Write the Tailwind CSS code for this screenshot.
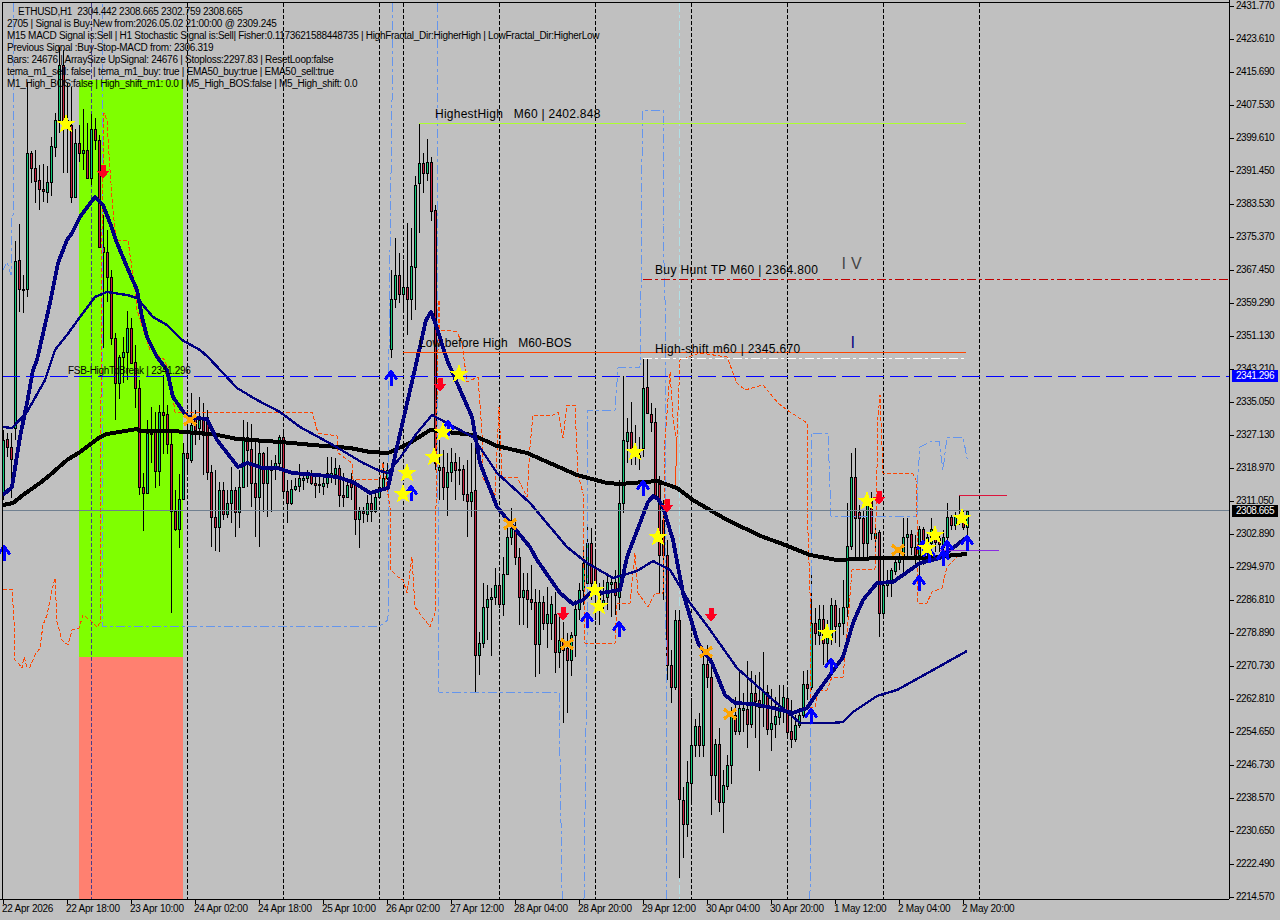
<!DOCTYPE html>
<html lang="en">
<head>
    <meta charset="UTF-8">
    <title>ETHUSD,H1</title>
    <script src="https://cdn.jsdelivr.net/npm/@tailwindcss/browser@4"></script>
</head>
<body class="bg-[#c0c0c0]">
<div class="w-[1280px] h-[920px] overflow-hidden grid grid-cols-[1229px_51px] grid-rows-[899px_21px] bg-[#c0c0c0] text-black text-[10px] leading-[12px] tracking-[-0.28px] font-['Liberation_Sans',sans-serif]">

    <!-- chart -->
    <div class="relative">
        <svg width="1229" height="899" viewBox="0 0 1229 899" fill="none" stroke-linejoin="round" class="absolute inset-0 [shape-rendering:crispEdges]">
            <defs>
                <polygon id="star" fill="#ffff00" points="0,-10 2.6,-3.2 9.8,-3.2 4,1.2 6.2,8.5 0,4.2 -6.2,8.5 -4,1.2 -9.8,-3.2 -2.6,-3.2"/>
                <path id="cross" stroke="#ffa500" stroke-width="3.4" d="M-6,-5 L6,5 M-6,5 L6,-5"/>
                <path id="down" fill="#ff0020" d="M-2.5,-7 H2.5 V-1 H6.5 L0,7 L-6.5,-1 H-2.5 Z"/>
                <path id="up" stroke="#0000ff" stroke-width="3" d="M0,8 V-5 M-6,1.5 L0,-6.5 L6,1.5"/>
            </defs>

            <rect x="79" y="80" width="104" height="577" fill="#7fff00"/>
            <rect x="79" y="657" width="104" height="242" fill="#ff8070"/>

            <!-- period separators -->
            <g stroke="#000" stroke-dasharray="4 2">
                <path d="M187.5 3V899M283.5 3V899M379.5 3V899M403.5 3V899M499.5 3V899M595.5 3V899M691.5 3V899M787.5 3V899M883.5 3V899M979.5 3V899"/>
            </g>
            <path d="M91.5 3V899" stroke="#483d8b" stroke-dasharray="4 2"/>
            <path d="M679.5 3V899" stroke="#b0e0e6" stroke-dasharray="9 3 3 3"/>

            <g id="candles"></g>

            <!-- step lines -->
            <g stroke="#6495ed" stroke-dasharray="9 3 3 3">
                <polyline points="13,3 13,215 11,218 11,275 7,262 3,270"/>
                <polyline points="392,3 392,100 390,250 389,350 388,620 380,626 102,626 102,3"/>
                <polyline points="437,3 437,300 439,692 559,692 562,888 563,899"/>
                <polyline points="584,899 587,640 587,410 615,410 618,368 640,367 641,290 641,207 643,110 663,110 663,225 665,300 666,640 667,899"/>
                <polyline points="810,899 811,600 811,433 828,433 831,516 917,516 918,473 920,447 932,441 939,441 943,470 947,437 963,437 968,463"/>
            </g>
            <g stroke="#ff4500" stroke-dasharray="4 2">
                <polyline points="3,589 12,589 14,620 15,660 18,663 22,668 24,657 27,667 30,667 35,655 40,648 43,625 47,615 52,590 55,578 57,622 62,640 68,645 72,630 79,628 83,615 90,620 97,627 100,623 100,564 101,400 102,230 104,113 107,120 110,170 113,210 116,240 128,240 130,255 134,280 137,310 150,350 165,360 172,390 175,412 312,412 318,433 337,436 338,453 352,463 353,479 380,479 383,463 390,507 391,570 398,577 403,580 407,593 412,557 415,607 430,627 435,613 437,400 439,300 440,330 445,330 457,332 462,343 467,382 478,377 482,433 483,478 495,495 499,407 502,477 517,477 527,497 530,447 533,415 553,415 558,412 563,438 567,405 575,405 578,475 583,493 585,643 615,644 617,603 630,603 635,553 638,593 648,607 655,593 663,593 665,440 670,372 673,417 677,443 675,490 680,360 700,353 727,357 737,383 745,390 763,385 778,403 787,410 807,423 808,533 811,623 810,707 815,707 818,690 827,690 832,677 843,677 847,633 852,570 875,569 878,417 880,395 883,473 913,474 916,480 917,517 918,603 927,603 932,592 942,588 947,567 957,557 967,554"/>
            </g>

            <!-- moving averages -->
            <polyline stroke="#000" stroke-width="4" points="3,505 13,503 23,495 40,483 50,475 67,460 80,452 100,437 107,434 137,429 140,431 173,431 197,433 213,434 237,439 280,442 313,445 350,448 370,452 388,453 410,443 430,430 473,435 497,446 527,453 577,475 607,483 620,484 657,481 677,488 693,500 727,520 763,537 780,543 810,555 837,560 880,558 923,558 967,554"/>
            <polyline stroke="#000080" stroke-width="2.4" points="3,427 12,428 27,412 45,380 55,350 67,335 80,317 95,297 107,292 127,295 137,298 153,317 167,325 182,340 200,350 208,357 237,388 257,400 280,412 300,427 333,445 363,463 380,471 388,473 400,458 417,433 432,415 473,437 497,473 530,503 567,547 587,563 613,578 637,571 653,561 670,570 690,603 708,627 737,668 773,700 800,723 832,723 843,722 853,712 877,696 897,690 933,670 967,651"/>
            <polyline stroke="#000080" stroke-width="3.8" points="3,495 12,487 20,437 27,403 33,370 37,360 50,303 58,263 67,240 72,233 80,217 95,197 103,205 110,223 117,243 127,267 137,290 142,317 147,337 157,357 167,370 173,397 187,417 207,419 217,440 238,467 247,463 263,468 277,468 293,473 317,475 337,477 353,482 370,493 388,488 397,447 417,360 426,320 431,312 436,325 447,360 472,417 480,463 497,507 530,547 537,560 560,593 573,604 583,600 593,590 602,593 620,590 627,557 640,523 648,502 653,496 658,499 663,507 673,540 683,593 698,643 712,663 725,695 735,703 753,704 773,708 793,713 807,708 817,693 843,657 853,623 863,600 877,583 893,582 920,563 940,558 967,537"/>

            <!-- price levels -->
            <path d="M2 376.5H1229" stroke="#0000ff" stroke-dasharray="18 6"/>
            <path d="M2 510.5H1229" stroke="#708090"/>
            <path d="M403 352.5H966" stroke="#ff4500"/>
            <path d="M643 358.5H964" stroke="#fff" stroke-dasharray="9 3 3 3"/>
            <path d="M643 279.5H1229" stroke="#c00000" stroke-dasharray="9 3 3 3"/>
            <path d="M419 123.5H966" stroke="#adff2f"/>
            <path d="M959 495.5H1007" stroke="#dc143c"/>
            <path d="M940 550.5H999" stroke="#8a2be2"/>

            <!-- signals -->
            <use href="#down" x="103" y="172"/><use href="#down" x="440" y="385"/><use href="#down" x="563" y="614"/>
            <use href="#down" x="667" y="506"/><use href="#down" x="711" y="615"/><use href="#down" x="879" y="498"/>
            <use href="#up" x="4" y="553"/><use href="#up" x="391" y="378"/><use href="#up" x="411" y="493"/>
            <use href="#up" x="448" y="428"/><use href="#up" x="587" y="620"/><use href="#up" x="619" y="629"/>
            <use href="#up" x="643" y="488"/><use href="#up" x="811" y="716"/><use href="#up" x="831" y="666"/>
            <use href="#up" x="919" y="583"/><use href="#up" x="923" y="548"/><use href="#up" x="929" y="555"/>
            <use href="#up" x="943" y="558"/><use href="#up" x="947" y="548"/><use href="#up" x="967" y="543"/>
            <use href="#cross" x="190" y="420"/><use href="#cross" x="510" y="524"/><use href="#cross" x="567" y="644"/>
            <use href="#cross" x="706" y="652"/><use href="#cross" x="730" y="714"/><use href="#cross" x="898" y="550"/>
            <use href="#star" x="66" y="124"/><use href="#star" x="407" y="473"/><use href="#star" x="403" y="494"/>
            <use href="#star" x="434" y="457"/><use href="#star" x="443" y="432"/><use href="#star" x="459" y="374"/>
            <use href="#star" x="635" y="452"/><use href="#star" x="595" y="590"/><use href="#star" x="599" y="606"/>
            <use href="#star" x="658" y="537"/><use href="#star" x="827" y="633"/><use href="#star" x="867" y="501"/>
            <use href="#star" x="927" y="548"/><use href="#star" x="935" y="535"/><use href="#star" x="962" y="518"/>

            <!-- chart frame -->
            <path d="M2.5 2V899M2 2.5H1229" stroke="#000"/>

            <g class="[shape-rendering:auto]" fill="#000">
                <text x="68" y="374" class="text-[10px]">FSB-HighToBreak | 2341.296</text>
                <text x="435" y="118" class="text-[12px] tracking-[0.25px]">HighestHigh&#160;&#160;&#160;M60 | 2402.848</text>
                <text x="419" y="347" class="text-[12px] tracking-[0.1px]">Low before High&#160;&#160;&#160;M60-BOS</text>
                <text x="655" y="274" class="text-[12px] tracking-[0.35px]">Buy Hunt TP M60 | 2364.800</text>
                <text x="655" y="353" class="text-[12px] tracking-[0.33px]">High-shift m60 | 2345.670</text>
                <text x="842" y="269" class="text-[16px]" fill="#444">l</text>
                <text x="851" y="269" class="text-[16px]" fill="#444">V</text>
                <text x="851" y="348" class="text-[16px]" fill="#000080">l</text>
            </g>
        </svg>

        <div class="absolute top-[6px] left-[7px] flex flex-col whitespace-pre">
            <p class="pl-[11px]">ETHUSD,H1  2304.442 2308.665 2302.759 2308.665</p>
            <p>2705 | Signal is Buy-New from:2026.05.02 21:00:00 @ 2309.245</p>
            <p>M15 MACD Signal is:Sell | H1 Stochastic Signal is:Sell| Fisher:0.1173621588448735 | HighFractal_Dir:HigherHigh | LowFractal_Dir:HigherLow</p>
            <p>Previous Signal :Buy-Stop-MACD from: 2306.319</p>
            <p>Bars: 24676 | ArraySize UpSignal: 24676 | Stoploss:2297.83 | ResetLoop:false</p>
            <p>tema_m1_sell: false | tema_m1_buy: true | EMA50_buy:true | EMA50_sell:true</p>
            <p>M1_High_BOS:false | High_shift_m1: 0.0 | M5_High_BOS:false | M5_High_shift: 0.0</p>
        </div>
    </div>

    <!-- price axis -->
    <div id="price-axis" class="relative border-l border-black flex flex-col leading-[10px] tracking-[-0.45px]">
        <div class="-mt-[10.5px]"></div>
        <div class="flex items-center h-[33px] shrink-0"><i class="w-[4px] h-px bg-black"></i><span class="ml-[2px]">2431.770</span></div>
        <div class="flex items-center h-[33px] shrink-0"><i class="w-[4px] h-px bg-black"></i><span class="ml-[2px]">2423.610</span></div>
        <div class="flex items-center h-[33px] shrink-0"><i class="w-[4px] h-px bg-black"></i><span class="ml-[2px]">2415.690</span></div>
        <div class="flex items-center h-[33px] shrink-0"><i class="w-[4px] h-px bg-black"></i><span class="ml-[2px]">2407.530</span></div>
        <div class="flex items-center h-[33px] shrink-0"><i class="w-[4px] h-px bg-black"></i><span class="ml-[2px]">2399.610</span></div>
        <div class="flex items-center h-[33px] shrink-0"><i class="w-[4px] h-px bg-black"></i><span class="ml-[2px]">2391.450</span></div>
        <div class="flex items-center h-[33px] shrink-0"><i class="w-[4px] h-px bg-black"></i><span class="ml-[2px]">2383.530</span></div>
        <div class="flex items-center h-[33px] shrink-0"><i class="w-[4px] h-px bg-black"></i><span class="ml-[2px]">2375.370</span></div>
        <div class="flex items-center h-[33px] shrink-0"><i class="w-[4px] h-px bg-black"></i><span class="ml-[2px]">2367.450</span></div>
        <div class="flex items-center h-[33px] shrink-0"><i class="w-[4px] h-px bg-black"></i><span class="ml-[2px]">2359.290</span></div>
        <div class="flex items-center h-[33px] shrink-0"><i class="w-[4px] h-px bg-black"></i><span class="ml-[2px]">2351.130</span></div>
        <div class="flex items-center h-[33px] shrink-0"><i class="w-[4px] h-px bg-black"></i><span class="ml-[2px]">2343.210</span></div>
        <div class="flex items-center h-[33px] shrink-0"><i class="w-[4px] h-px bg-black"></i><span class="ml-[2px]">2335.050</span></div>
        <div class="flex items-center h-[33px] shrink-0"><i class="w-[4px] h-px bg-black"></i><span class="ml-[2px]">2327.130</span></div>
        <div class="flex items-center h-[33px] shrink-0"><i class="w-[4px] h-px bg-black"></i><span class="ml-[2px]">2318.970</span></div>
        <div class="flex items-center h-[33px] shrink-0"><i class="w-[4px] h-px bg-black"></i><span class="ml-[2px]">2311.050</span></div>
        <div class="flex items-center h-[33px] shrink-0"><i class="w-[4px] h-px bg-black"></i><span class="ml-[2px]">2302.890</span></div>
        <div class="flex items-center h-[33px] shrink-0"><i class="w-[4px] h-px bg-black"></i><span class="ml-[2px]">2294.970</span></div>
        <div class="flex items-center h-[33px] shrink-0"><i class="w-[4px] h-px bg-black"></i><span class="ml-[2px]">2286.810</span></div>
        <div class="flex items-center h-[33px] shrink-0"><i class="w-[4px] h-px bg-black"></i><span class="ml-[2px]">2278.890</span></div>
        <div class="flex items-center h-[33px] shrink-0"><i class="w-[4px] h-px bg-black"></i><span class="ml-[2px]">2270.730</span></div>
        <div class="flex items-center h-[33px] shrink-0"><i class="w-[4px] h-px bg-black"></i><span class="ml-[2px]">2262.810</span></div>
        <div class="flex items-center h-[33px] shrink-0"><i class="w-[4px] h-px bg-black"></i><span class="ml-[2px]">2254.650</span></div>
        <div class="flex items-center h-[33px] shrink-0"><i class="w-[4px] h-px bg-black"></i><span class="ml-[2px]">2246.730</span></div>
        <div class="flex items-center h-[33px] shrink-0"><i class="w-[4px] h-px bg-black"></i><span class="ml-[2px]">2238.570</span></div>
        <div class="flex items-center h-[33px] shrink-0"><i class="w-[4px] h-px bg-black"></i><span class="ml-[2px]">2230.650</span></div>
        <div class="flex items-center h-[33px] shrink-0"><i class="w-[4px] h-px bg-black"></i><span class="ml-[2px]">2222.490</span></div>
        <div class="flex items-center h-[33px] shrink-0"><i class="w-[4px] h-px bg-black"></i><span class="ml-[2px]">2214.570</span></div>
        <div class="absolute left-[2px] top-[370px] w-[46px] h-[12px] leading-[12px] bg-[#0000ff] text-white text-center">2341.296</div>
        <div class="absolute left-[2px] top-[505px] w-[46px] h-[12px] leading-[12px] bg-black text-white text-center">2308.665</div>
    </div>

    <!-- time axis -->
    <div class="col-span-2 tracking-[-0.25px]">
        <div class="w-[1229px] border-t border-black flex">
            <div class="w-[64px] shrink-0"><i class="block w-px h-[4px] bg-black ml-[3px]"></i><span class="block pl-[2px] -mt-[1px]">22 Apr 2026</span></div>
            <div class="w-[64px] shrink-0"><i class="block w-px h-[4px] bg-black ml-[3px]"></i><span class="block pl-[2px] -mt-[1px]">22 Apr 18:00</span></div>
            <div class="w-[64px] shrink-0"><i class="block w-px h-[4px] bg-black ml-[3px]"></i><span class="block pl-[2px] -mt-[1px]">23 Apr 10:00</span></div>
            <div class="w-[64px] shrink-0"><i class="block w-px h-[4px] bg-black ml-[3px]"></i><span class="block pl-[2px] -mt-[1px]">24 Apr 02:00</span></div>
            <div class="w-[64px] shrink-0"><i class="block w-px h-[4px] bg-black ml-[3px]"></i><span class="block pl-[2px] -mt-[1px]">24 Apr 18:00</span></div>
            <div class="w-[64px] shrink-0"><i class="block w-px h-[4px] bg-black ml-[3px]"></i><span class="block pl-[2px] -mt-[1px]">25 Apr 10:00</span></div>
            <div class="w-[64px] shrink-0"><i class="block w-px h-[4px] bg-black ml-[3px]"></i><span class="block pl-[2px] -mt-[1px]">26 Apr 02:00</span></div>
            <div class="w-[64px] shrink-0"><i class="block w-px h-[4px] bg-black ml-[3px]"></i><span class="block pl-[2px] -mt-[1px]">27 Apr 12:00</span></div>
            <div class="w-[64px] shrink-0"><i class="block w-px h-[4px] bg-black ml-[3px]"></i><span class="block pl-[2px] -mt-[1px]">28 Apr 04:00</span></div>
            <div class="w-[64px] shrink-0"><i class="block w-px h-[4px] bg-black ml-[3px]"></i><span class="block pl-[2px] -mt-[1px]">28 Apr 20:00</span></div>
            <div class="w-[64px] shrink-0"><i class="block w-px h-[4px] bg-black ml-[3px]"></i><span class="block pl-[2px] -mt-[1px]">29 Apr 12:00</span></div>
            <div class="w-[64px] shrink-0"><i class="block w-px h-[4px] bg-black ml-[3px]"></i><span class="block pl-[2px] -mt-[1px]">30 Apr 04:00</span></div>
            <div class="w-[64px] shrink-0"><i class="block w-px h-[4px] bg-black ml-[3px]"></i><span class="block pl-[2px] -mt-[1px]">30 Apr 20:00</span></div>
            <div class="w-[64px] shrink-0"><i class="block w-px h-[4px] bg-black ml-[3px]"></i><span class="block pl-[2px] -mt-[1px]">1 May 12:00</span></div>
            <div class="w-[64px] shrink-0"><i class="block w-px h-[4px] bg-black ml-[3px]"></i><span class="block pl-[2px] -mt-[1px]">2 May 04:00</span></div>
            <div class="w-[64px] shrink-0"><i class="block w-px h-[4px] bg-black ml-[3px]"></i><span class="block pl-[2px] -mt-[1px]">2 May 20:00</span></div>
        </div>
    </div>
</div>

<script>
// high, body top, body bottom, low, colour; one bar every 4px from x=3
var bars = `430 440 495 500 g|433 439 447 457 r|433 447 459 498 r|241 261 428 440 g|224 260 289 312 r|275 289 290 313 r|83 153 289 297 g|151 153 168 183 r|150 168 181 203 r|165 180 189 210 r
164 189 191 202 r|166 182 192 203 g|137 146 182 196 g|113 120 147 157 g|47 65 120 133 g|50 65 120 173 r|83 120 125 173 r|87 125 197 203 r|129 143 197 197 g|125 143 153 162 r
109 150 153 170 g|123 150 178 178 r|114 129 178 185 g|118 129 140 150 r|135 140 247 247 r|215 247 252 348 r|230 252 277 302 r|270 277 338 345 r|333 338 383 420 r|355 357 383 399 g
337 352 357 383 g|311 328 352 380 g|318 328 363 363 r|345 362 388 408 r|380 388 487 495 r|473 487 493 531 r|420 433 493 493 g|407 433 434 463 g|412 432 471 488 r|405 412 471 486 g
375 412 415 454 r|405 414 444 454 r|433 444 511 613 r|490 511 529 531 r|474 499 529 548 g|443 453 499 499 g|410 453 458 473 r|393 425 460 463 g|410 417 430 445 r|397 420 428 440 g
403 417 435 475 r|410 417 472 480 r|465 472 517 547 r|470 517 527 551 r|482 490 527 552 g|482 490 514 520 r|490 503 514 518 g|467 490 503 523 g|487 490 512 537 r|470 487 512 528 g
420 437 487 487 g|422 437 450 487 r|424 449 483 507 r|442 483 497 537 r|440 453 497 547 g|452 453 483 512 r|447 467 483 517 g|460 467 470 512 g|455 463 468 480 g|435 437 463 470 g
433 437 491 495 r|480 491 503 523 r|480 489 503 505 g|478 486 489 491 g|464 478 486 492 g|472 478 480 490 g|470 475 478 483 g|470 475 483 485 r|474 483 485 498 r|476 484 485 493 g
475 483 486 495 g|457 473 483 488 g|457 473 477 483 g|458 468 474 485 g|465 468 495 507 r|473 495 497 507 r|480 485 497 497 g|473 482 487 500 r|480 485 519 535 r|507 511 519 548 g
507 511 513 523 r|495 503 514 522 g|494 503 511 522 r|490 497 511 513 g|477 487 497 497 g|462 478 488 490 g|463 470 478 480 g|270 299 349 358 g|238 275 299 308 g|253 275 294 303 r
260 287 294 310 g|223 287 299 335 r|228 266 299 320 g|176 185 267 310 g|124 163 183 233 g|153 163 173 193 r|139 162 173 181 g|157 162 211 221 r|205 210 463 470 r|440 467 470 500 g
450 467 487 500 r|453 472 487 516 g|448 462 472 482 g|453 462 470 500 r|457 469 470 485 g|465 469 494 501 r|460 494 501 537 r|443 492 501 517 g|440 490 655 693 r|632 643 655 675 g
583 607 643 648 g|585 599 607 640 g|588 597 599 656 g|568 585 597 605 g|575 585 604 608 r|557 574 604 616 g|527 537 574 574 g|508 528 537 545 g|520 528 557 565 r|548 557 597 625 r
573 590 597 625 g|573 590 599 628 r|565 599 602 610 r|589 602 644 677 r|590 602 644 674 g|596 602 623 630 r|587 614 623 648 g|596 604 623 640 g|592 614 652 673 r|615 640 652 668 g
622 640 650 723 r|633 648 660 713 r|632 635 660 676 g|600 609 635 657 g|583 590 609 620 g|548 563 590 605 g|527 543 583 590 g|528 543 583 600 r|550 567 593 620 r|583 590 600 625 r
580 600 604 612 g|573 582 597 610 g|577 582 584 617 g|570 582 595 615 r|480 503 597 610 g|376 440 503 513 g|418 432 441 463 g|402 432 450 465 r|425 450 455 465 r|437 455 458 470 g
359 388 448 457 g|359 387 413 413 r|403 414 422 432 r|408 422 497 500 r|476 484 555 593 r|500 520 555 600 r|540 555 665 680 r|650 665 687 703 r|610 620 687 690 g|610 620 799 878 r
787 800 824 858 r|761 782 824 837 g|698 745 783 803 g|719 726 745 757 g|713 726 745 757 r|653 664 745 757 g|645 664 677 688 r|655 677 775 815 r|739 744 775 800 g|728 744 802 812 r
770 785 802 833 g|755 765 786 790 g|707 715 765 784 g|697 715 731 735 r|672 708 731 735 g|693 708 710 732 g|661 709 724 748 r|671 693 724 728 g|675 693 701 738 r|672 700 707 771 r
652 692 707 727 g|685 692 729 735 r|689 723 729 751 g|697 716 724 738 g|685 706 717 725 g|685 697 707 723 g|690 698 732 735 r|700 731 739 748 r|715 725 739 742 g|708 715 725 728 g
671 684 715 718 g|670 684 688 700 r|570 623 687 690 g|608 623 633 645 r|605 619 635 645 g|605 619 643 665 r|620 632 643 663 g|598 605 637 645 g|600 605 626 643 r|608 623 626 647 g
580 607 623 635 g|503 546 607 617 g|453 477 546 550 g|448 477 518 557 r|505 512 518 560 r|510 518 543 557 r|495 505 543 557 g|492 500 533 540 r|525 533 538 548 g|530 532 613 637 r
557 585 613 618 g|570 580 585 597 g|568 570 580 597 g|557 562 571 575 g|550 557 562 570 g|518 537 558 572 g|518 534 537 557 g|530 534 547 555 r|535 547 555 567 r|526 529 555 577 g
527 529 548 565 r|533 537 550 560 g|518 529 543 555 g|530 535 542 552 r|533 538 544 552 r|530 537 547 555 g|503 517 537 540 g|515 517 525 530 r|512 515 525 530 g|496 515 518 525 r
510 515 527 530 r|510 511 527 537 g`.replace(/\n/g, '|').split('|');

var svgNS = 'http://www.w3.org/2000/svg';
var group = document.getElementById('candles');
bars.forEach(function (bar, i) {
    var v = bar.split(' ');
    var x = 3 + 4 * i + 0.5;
    var wick = document.createElementNS(svgNS, 'path');
    wick.setAttribute('d', 'M' + x + ' ' + v[0] + 'V' + v[3]);
    wick.setAttribute('stroke', '#000');
    group.appendChild(wick);
    var body = document.createElementNS(svgNS, 'rect');
    body.setAttribute('x', x - 1);
    body.setAttribute('y', +v[1] + 0.5);
    body.setAttribute('width', 2);
    body.setAttribute('height', Math.max(v[2] - v[1], 1));
    body.setAttribute('fill', v[4] === 'g' ? '#10c878' : '#c8203f');
    body.setAttribute('stroke', '#000');
    group.appendChild(body);
});
</script>
</body>
</html>
